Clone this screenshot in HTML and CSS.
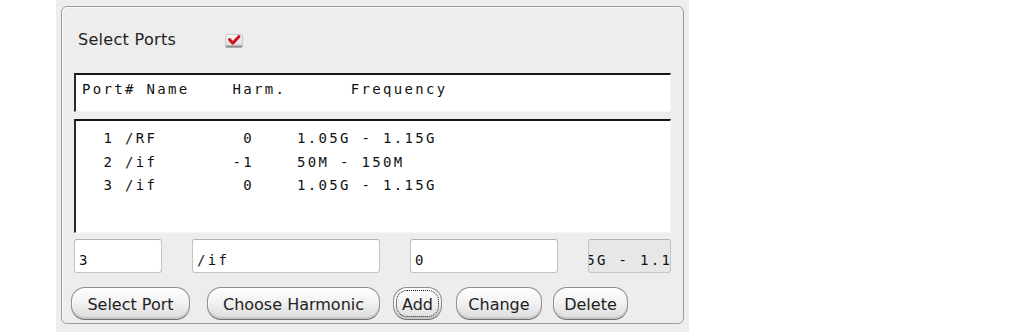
FILE: index.html
```html
<!DOCTYPE html>
<html lang="en">
<head>
  <meta charset="UTF-8">
  <title>Select Ports</title>
  <link rel="stylesheet" href="styles.css">
</head>
<body>
  <div class="window">
    <div class="panel">
      <!-- Select Ports toggle -->
      <div class="select-row">
        <span class="select-label">Select Ports</span>
        <span class="checkbox">
          <svg width="18" height="14" viewBox="0 0 18 14">
            <defs>
              <linearGradient id="cbg" x1="0" y1="0" x2="0" y2="1">
                <stop offset="0" stop-color="#f7f7f7"/>
                <stop offset="1" stop-color="#d9d9d9"/>
              </linearGradient>
            </defs>
            <rect x="0.5" y="0.5" width="17" height="13" rx="1.5" fill="url(#cbg)" stroke="#c9c9c9"/>
            <rect x="1" y="11.5" width="16" height="2" fill="#8f8f8f"/>
            <path d="M4.5 5.5 L7.8 9.2 L14 2.5" fill="none" stroke="#d4101a" stroke-width="3" stroke-linecap="round" stroke-linejoin="round"/>
          </svg>
        </span>
      </div>

      <!-- Port table -->
      <div class="table-head sunken">Port# Name    Harm.      Frequency</div>
      <div class="table-body sunken">
        <div class="port-row">  1 /RF        0    1.05G - 1.15G</div>
        <div class="port-row">  2 /if       -1    50M - 150M</div>
        <div class="port-row">  3 /if        0    1.05G - 1.15G</div>
      </div>

      <!-- Edit fields -->
      <div class="fields">
        <div class="field">3</div>
        <div class="field">/if</div>
        <div class="field">0</div>
        <div class="field field-disabled"><span class="scrolled">1.05G - 1.15G</span></div>
      </div>

      <!-- Actions -->
      <div class="buttons">
        <button class="btn btn-select">Select Port</button>
        <button class="btn btn-harm">Choose Harmonic</button>
        <button class="btn btn-add">Add</button>
        <button class="btn btn-change">Change</button>
        <button class="btn btn-delete">Delete</button>
      </div>
    </div>
  </div>
</body>
</html>
```

FILE: styles.css
```css
body {
  margin: 0;
  background: #fff;
  font-family: 'DejaVu Sans', sans-serif;
  color: #222;
}

.window {
  margin-left: 56px;
  width: 623px;
  height: 326px;
  padding: 6px 5px 0 5px;
  background: #ededed;
}

.panel {
  box-sizing: border-box;
  height: 318px;
  border: 1px solid #9c9c9c;
  border-radius: 6px;
  box-shadow: inset 1px 1px 0 #fafafa;
  padding: 23px 12px 0 12px;
}

.select-row {
  display: flex;
  align-items: center;
  height: 19px;
}

.select-label {
  width: 147px;
  padding-left: 4px;
  font-size: 16px;
  line-height: 19px;
  letter-spacing: 0.3px;
}

.checkbox {
  display: flex;
  margin-top: 2px;
}

.sunken {
  background: #fff;
  border-top: 2px solid #161616;
  border-left: 2px solid #2a2a2a;
  border-right: 1px solid #f6f6f6;
  border-bottom: 1px solid #f6f6f6;
  font-family: 'DejaVu Sans Mono', monospace;
  font-size: 14px;
  letter-spacing: 2.32px;
  color: #111;
}

.table-head {
  margin-top: 24px;
  height: 30px;
  padding: 6px 0 0 6px;
  line-height: 16px;
  white-space: pre;
}

.table-body {
  margin-top: 7px;
  height: 105px;
  padding: 6px 0 0 6px;
}

.port-row {
  line-height: 23.5px;
  white-space: pre;
}

.fields {
  display: grid;
  grid-template-columns: 88px 188px 148px 1fr;
  gap: 30px;
  margin-top: 6px;
}

.field {
  height: 34px;
  box-sizing: border-box;
  padding: 6px 0 0 4px;
  background: #fff;
  border: 1px solid #c4c4c4;
  border-top-color: #b0b0b0;
  border-radius: 3px;
  font-family: 'DejaVu Sans Mono', monospace;
  font-size: 14px;
  letter-spacing: 2.32px;
  line-height: 28px;
  white-space: pre;
  overflow: hidden;
  color: #111;
}

.field-disabled {
  background: #e7e7e7;
}

.scrolled {
  display: block;
  text-indent: -39px;
}

.buttons {
  display: flex;
  gap: 13px;
  margin-top: 14px;
  margin-left: -3px;
}

.btn {
  height: 33px;
  padding: 2px 0 0 0;
  font-family: 'DejaVu Sans', sans-serif;
  font-size: 16px;
  text-align: center;
  color: #222;
  background: linear-gradient(#ffffff, #f2f2f2 45%, #dcdcdc);
  border: 1px solid #8e8e8e;
  border-bottom-color: #6f6f6f;
  border-radius: 14px;
  box-shadow: inset 0 -2px 0 #c8c8c8, inset 1px 0 0 #fff;
}

.btn-select {
  width: 119px;
  margin-right: 4px;
}

.btn-harm {
  width: 173px;
}

.btn-add {
  width: 49px;
  outline: 1px dotted #111;
  outline-offset: -4px;
}

.btn-change {
  width: 86px;
  margin-left: 1px;
}

.btn-delete {
  width: 75px;
  margin-left: -2px;
}
```
